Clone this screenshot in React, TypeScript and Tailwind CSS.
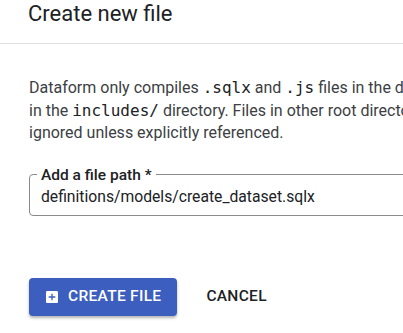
import React from 'react';

const Code: React.FC<{ children: React.ReactNode }> = ({ children }) => (
  <code className="font-['DejaVu_Sans_Mono',monospace] text-[16px] text-[#202124]">{children}</code>
);

const AddBoxIcon: React.FC = () => (
  <svg width="16" height="16" viewBox="0 0 24 24" fill="currentColor" aria-hidden="true">
    <path d="M19 3H5c-1.11 0-2 .9-2 2v14c0 1.1.89 2 2 2h14c1.1 0 2-.9 2-2V5c0-1.1-.9-2-2-2zm-2 10h-4v4h-2v-4H7v-2h4V7h2v4h4v2z" />
  </svg>
);

export default function App() {
  return (
    <div className="w-[403px] h-[333px] overflow-hidden bg-white font-['Roboto',sans-serif] text-[#202124]">
      {/* dialog header */}
      <div className="border-b border-[#e0e0e0] pl-[28px] pb-[15px]">
        <h1 className="text-[22px] leading-[28px] font-normal whitespace-nowrap">Create new file</h1>
      </div>

      {/* body */}
      <div className="pl-[29px] pt-[33px]">
        <div className="text-[16px] leading-[22.5px] text-[#3c4043] whitespace-nowrap">
          <div>
            Dataform only compiles <Code>.sqlx</Code> and <Code>.js</Code> files in the definitions/ directory
          </div>
          <div>
            in the <Code>includes/</Code> directory. Files in other root directories are
          </div>
          <div>ignored unless explicitly referenced.</div>
        </div>

        <fieldset className="mt-[22px] w-[420px] border border-[#8a8a8a] rounded-[4px] pl-[11px] pt-[2px] pb-[6px]">
          <legend className="-ml-[4px] px-[4px] text-[15.5px] leading-[16px] font-medium text-[#202124]">
            Add a file path *
          </legend>
          <div className="text-[15.7px] leading-[24px] text-[#202124] whitespace-nowrap">
            definitions/models/create_dataset.sqlx
          </div>
        </fieldset>

        <div className="mt-[62px] flex items-center gap-[13px]">
          <button className="h-[38px] flex items-center gap-[8px] pl-[15px] pr-[16px] rounded-[4px] bg-[#3c5ebf] text-white text-[15.5px] font-medium tracking-[0.3px] shadow-[0_2px_3px_rgba(0,0,0,0.3)]">
            <AddBoxIcon />
            <span>CREATE FILE</span>
          </button>
          <button className="h-[38px] px-[16px] text-[15.5px] font-medium text-[#202124] tracking-[0.3px]">
            CANCEL
          </button>
        </div>
      </div>
    </div>
  );
}
